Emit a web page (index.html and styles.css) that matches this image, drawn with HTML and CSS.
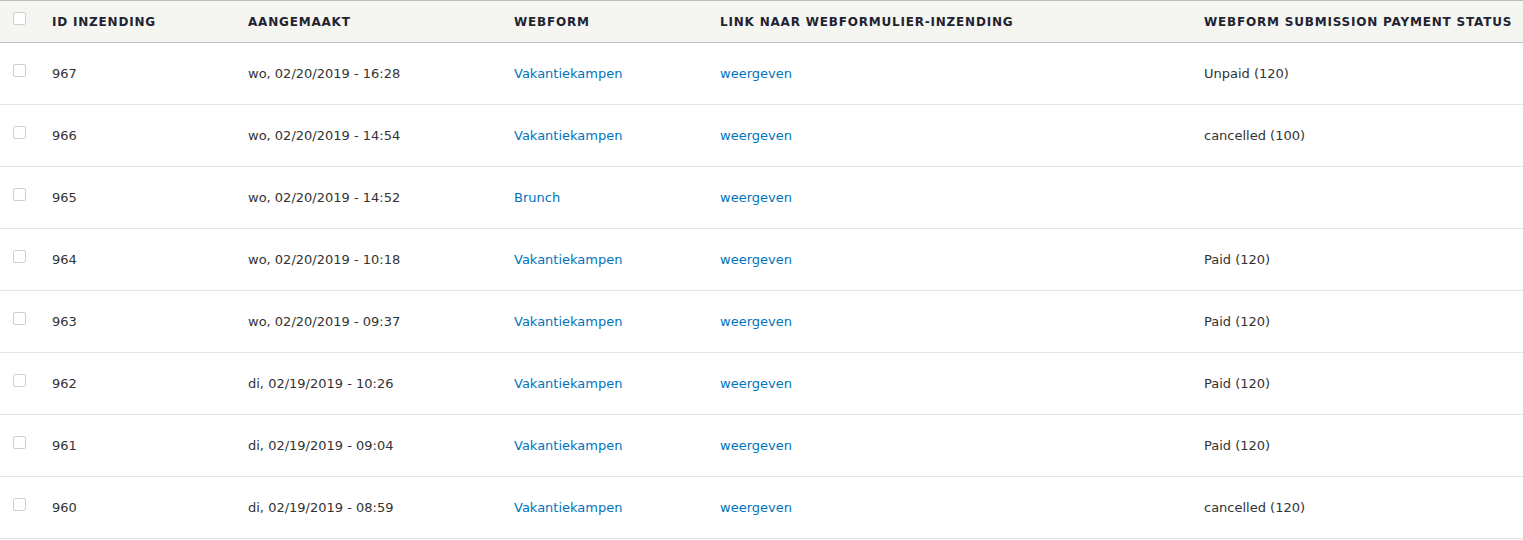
FILE: index.html
```html
<!DOCTYPE html>
<html lang="nl">
<head>
<meta charset="utf-8">
<title>Inzendingen</title>
<link rel="stylesheet" href="styles.css">
</head>
<body>
<table class="subs">
  <colgroup>
    <col class="c-sel"><col class="c-id"><col class="c-date"><col class="c-form"><col class="c-link"><col class="c-status">
  </colgroup>
  <thead>
    <tr>
      <th class="sel"><span class="cb"></span></th>
      <th>ID inzending</th>
      <th>Aangemaakt</th>
      <th>Webform</th>
      <th>Link naar webformulier-inzending</th>
      <th>Webform submission payment status</th>
    </tr>
  </thead>
  <tbody>
    <tr><td class="sel"><span class="cb"></span></td><td>967</td><td>wo, 02/20/2019 - 16:28</td><td><a href="#">Vakantiekampen</a></td><td><a href="#">weergeven</a></td><td>Unpaid (120)</td></tr>
    <tr><td class="sel"><span class="cb"></span></td><td>966</td><td>wo, 02/20/2019 - 14:54</td><td><a href="#">Vakantiekampen</a></td><td><a href="#">weergeven</a></td><td>cancelled (100)</td></tr>
    <tr><td class="sel"><span class="cb"></span></td><td>965</td><td>wo, 02/20/2019 - 14:52</td><td><a href="#">Brunch</a></td><td><a href="#">weergeven</a></td><td></td></tr>
    <tr><td class="sel"><span class="cb"></span></td><td>964</td><td>wo, 02/20/2019 - 10:18</td><td><a href="#">Vakantiekampen</a></td><td><a href="#">weergeven</a></td><td>Paid (120)</td></tr>
    <tr><td class="sel"><span class="cb"></span></td><td>963</td><td>wo, 02/20/2019 - 09:37</td><td><a href="#">Vakantiekampen</a></td><td><a href="#">weergeven</a></td><td>Paid (120)</td></tr>
    <tr><td class="sel"><span class="cb"></span></td><td>962</td><td>di, 02/19/2019 - 10:26</td><td><a href="#">Vakantiekampen</a></td><td><a href="#">weergeven</a></td><td>Paid (120)</td></tr>
    <tr><td class="sel"><span class="cb"></span></td><td>961</td><td>di, 02/19/2019 - 09:04</td><td><a href="#">Vakantiekampen</a></td><td><a href="#">weergeven</a></td><td>Paid (120)</td></tr>
    <tr><td class="sel"><span class="cb"></span></td><td>960</td><td>di, 02/19/2019 - 08:59</td><td><a href="#">Vakantiekampen</a></td><td><a href="#">weergeven</a></td><td>cancelled (120)</td></tr>
  </tbody>
</table>
</body>
</html>
```
FILE: styles.css
```css
html, body {
  margin: 0;
  padding: 0;
  background: #fff;
}
body {
  font-family: "DejaVu Sans", "Liberation Sans", sans-serif;
  font-size: 13px;
  color: #333;
}
.subs {
  width: 1523px;
  border-collapse: collapse;
  table-layout: fixed;
}
.c-sel { width: 40px; }
.c-id { width: 196px; }
.c-date { width: 266px; }
.c-form { width: 206px; }
.c-link { width: 484px; }
.c-status { width: 331px; }

.subs th {
  background: #f5f5f2;
  border-top: 1px solid #bfbfba;
  border-bottom: 1px solid #bfbfba;
  height: 41px;
  padding: 0 12px;
  box-sizing: border-box;
  text-align: left;
  font-weight: bold;
  font-size: 12px;
  text-transform: uppercase;
  letter-spacing: 0.8px;
  color: #222330;
  white-space: nowrap;
  vertical-align: middle;
}
.subs thead tr { height: 42px; }
.subs td {
  height: 61px;
  padding: 0 12px;
  border-bottom: 1px solid #e6e4df;
  vertical-align: middle;
  white-space: nowrap;
}
.subs .sel {
  padding: 0 0 0 13px;
}
.cb {
  display: block;
  width: 11px;
  height: 11px;
  border: 1px solid #cfcfcc;
  border-radius: 2px;
  background: #fff;
  position: relative;
  top: -3px;
}
.subs a {
  color: #0074bd;
  text-decoration: none;
}
```
